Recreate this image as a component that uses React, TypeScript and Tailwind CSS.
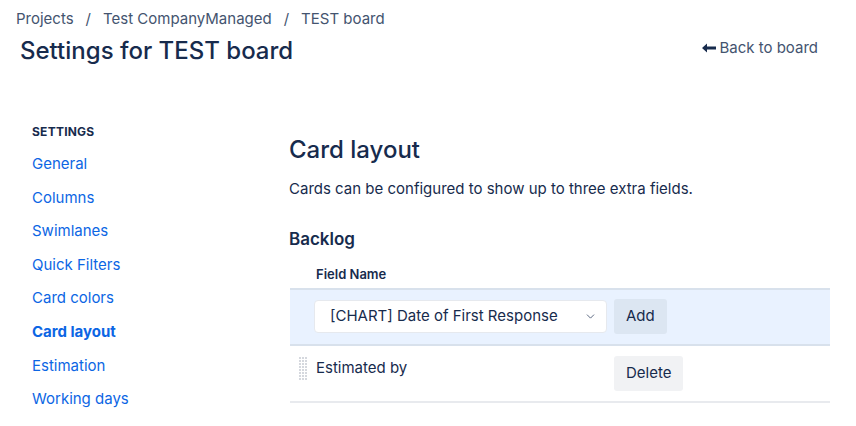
import { ChevronDown } from "lucide-react";

const navItems = [
  "General",
  "Columns",
  "Swimlanes",
  "Quick Filters",
  "Card colors",
  "Card layout",
  "Estimation",
  "Working days",
  "Issue detail view",
];

function DragHandle() {
  const dots = [];
  for (let r = 0; r < 8; r++) {
    for (let c = 0; c < 3; c++) {
      dots.push(<rect key={`${r}-${c}`} x={c * 3} y={r * 3} width="2" height="2" fill="#d5d8de" />);
    }
  }
  return (
    <svg width="8" height="24" viewBox="0 0 8 24" className="shrink-0">
      {dots}
    </svg>
  );
}

export default function App() {
  return (
    <div className="w-[856px] h-[426px] overflow-hidden bg-white font-['Inter',sans-serif] text-[#172b4d]">
      {/* ── Header ─────────────────────────── */}
      <div className="pl-4 pr-[38px] pt-[9px]">
        <nav className="flex items-center text-[15px] leading-5 text-[#44546f]">
          <span>Projects</span>
          <span className="mx-[12px]">/</span>
          <span>Test CompanyManaged</span>
          <span className="mx-[12px]">/</span>
          <span>TEST board</span>
        </nav>
        <div className="flex items-center justify-between mt-[6px]">
          <h1 className="pl-1 text-[24px] leading-8 font-medium text-[#172b4d]">
            Settings for TEST board
          </h1>
          <a className="flex items-center gap-[3px] mb-[6px] text-[15px] text-[#44546f]">
            <svg width="14" height="10" viewBox="0 0 14 10">
              <path d="M0 5 L5 0.5 V3.5 H14 V6.5 H5 V9.5 Z" fill="#172b4d" />
            </svg>
            <span>Back to board</span>
          </a>
        </div>
      </div>

      <div className="flex mt-[57px]">
        {/* ── Sidebar ─────────────────────── */}
        <aside className="w-[289px] shrink-0 pl-8">
          <p className="text-[12px] leading-4 font-bold tracking-[0.02em] uppercase text-[#172b4d]">
            Settings
          </p>
          <ul className="mt-[14px] flex flex-col gap-[13.6px]">
            {navItems.map((item) => (
              <li
                key={item}
                className={
                  item === "Card layout"
                    ? "text-[15px] leading-5 font-bold text-[#0c66e4]"
                    : "text-[15px] leading-5 text-[#0c66e4]"
                }
              >
                {item}
              </li>
            ))}
          </ul>
        </aside>

        {/* ── Main ────────────────────────── */}
        <main className="flex-1 pr-[26px] pt-[10px]">
          <h2 className="text-[24px] leading-8 font-medium text-[#172b4d]">Card layout</h2>
          <p className="mt-[13px] text-[15px] leading-5 text-[#172b4d]">
            Cards can be configured to show up to three extra fields.
          </p>
          <h3 className="mt-[28px] text-[17px] leading-6 font-semibold text-[#172b4d]">Backlog</h3>

          <div className="mt-[14px] ml-[1px]">
            <div className="grid grid-cols-[26px_298px_1fr] text-[13px] font-semibold pb-[3px]">
              <span />
              <span>Field Name</span>
              <span />
            </div>
            <div className="grid grid-cols-[24px_300px_1fr] items-center bg-[#e9f2ff] border-y-2 border-[#d8e1ec] h-[58px]">
              <span />
              <div className="relative w-[293px]">
                <div className="flex items-center justify-between h-[33px] bg-white rounded-[4px] border border-[#e6e9ee] pl-[15px] pr-[9px] text-[15px]">
                  <span>[CHART] Date of First Response</span>
                  <ChevronDown size={13} strokeWidth={1.6} color="#44546f" />
                </div>
              </div>
              <div>
                <button className="h-[35px] px-[12px] rounded-[3px] bg-[#dce6f2] text-[15px] text-[#172b4d]">
                  Add
                </button>
              </div>
            </div>
            <div className="grid grid-cols-[24px_300px_1fr] border-b-2 border-[#e8eaee] h-[57px]">
              <div className="pl-[9px] pt-[11px]">
                <DragHandle />
              </div>
              <div className="pl-[2px] pt-[11px] text-[15px]">Estimated by</div>
              <div className="pt-[10px]">
                <button className="h-[35px] px-[12px] rounded-[3px] bg-[#f1f2f4] text-[15px] text-[#172b4d]">
                  Delete
                </button>
              </div>
            </div>
          </div>
        </main>
      </div>
    </div>
  );
}
